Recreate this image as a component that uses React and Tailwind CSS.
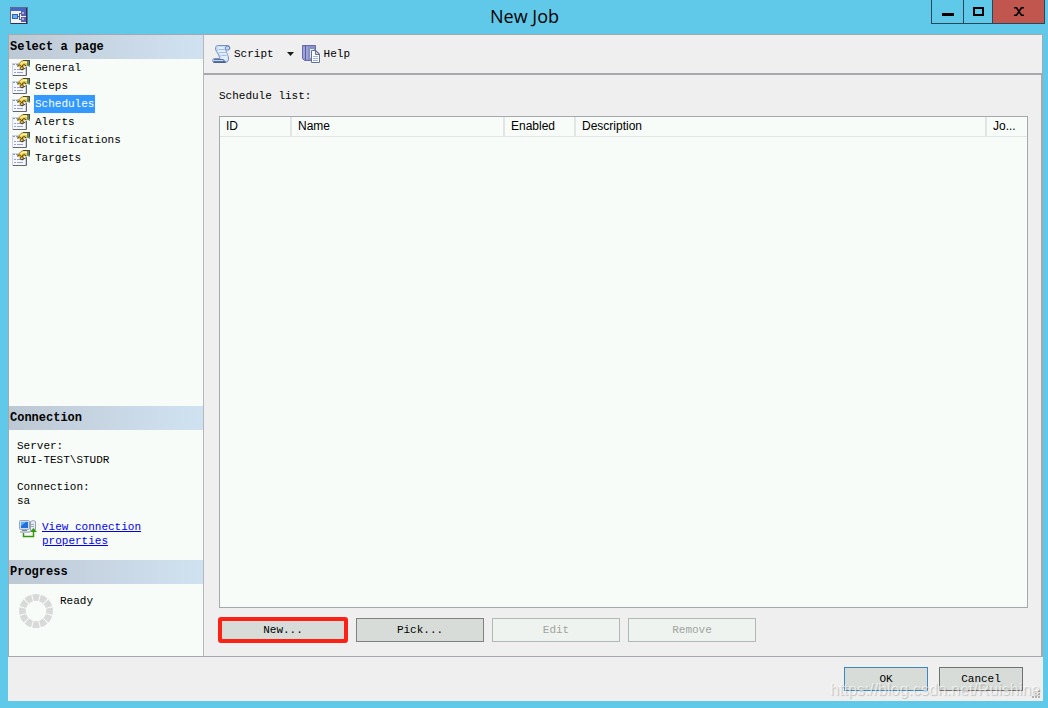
import { useState } from "react";

const pages = ["General", "Steps", "Schedules", "Alerts", "Notifications", "Targets"];

const columns = [
  { label: "ID", width: "w-[72px]" },
  { label: "Name", width: "w-[213px]" },
  { label: "Enabled", width: "w-[71px]" },
  { label: "Description", width: "" },
  { label: "Jo...", width: "w-10" },
];

function AppIcon() {
  return (
    <svg width="18" height="17" viewBox="0 0 18 17" shapeRendering="crispEdges" aria-hidden="true">
      <rect width="18" height="17" fill="#5a6a94" />
      <path d="M17 1v16H1v-1h15V1z" fill="#25305c" />
      <rect x="1" y="1" width="15" height="3" fill="#4468bd" />
      <rect x="1" y="4" width="15" height="12" fill="#f1f4fc" />
      <rect x="2" y="7" width="6" height="5" fill="#2f62b8" />
      <rect x="3" y="8" width="4" height="3" fill="#5fb4f2" />
      <path d="M8 9h2v1H8zM9 6h1v7H9zM10 6h1v1h-1zM10 12h1v1h-1z" fill="#4d5596" />
      <rect x="11" y="4" width="5" height="5" fill="#5c5fae" />
      <rect x="12" y="5" width="2" height="2" fill="#a9abe0" />
      <rect x="11" y="10" width="5" height="5" fill="#5c5fae" />
      <rect x="12" y="11" width="2" height="2" fill="#a9abe0" />
    </svg>
  );
}

function PageIcon() {
  return (
    <svg width="18" height="16" viewBox="0 0 18 16" aria-hidden="true">
      <rect x="0.5" y="3.5" width="13" height="12" fill="#f6f8fe" stroke="#cdd3e2" />
      <path d="M14.5 7v8.500H1" stroke="#66666c" fill="none" />
      <path d="M1 4.500h6" stroke="#7a96dc" strokeDasharray="2 1" />
      <path d="M2 9.500h2M5 9.500h6M2 12.500h2M5 12.500h6" stroke="#929fe0" />
      <path d="M5 6 9 1.500 11.500.500H16v5l-3 .5-2.500 3-2-.5L7 7z" fill="#edc63c" />
      <path d="M5 6 9 1.500 11.500.500H16" stroke="#b08f2c" fill="none" />
      <path d="m8.500 4 3-2 4 .5" stroke="#fff3a8" strokeWidth="1.500" fill="none" />
      <path d="m5.500 6.500 2-1.500 2 1.500-1.500 2 2 1.500 1.500-2-1.500-2 2-1.500 2.500 1.500M10 10l3.500-2" stroke="#4b3f1c" fill="none" />
      <path d="M15 1h3v6l-3-1.500z" fill="#628d6c" />
      <path d="M11 .500h7M17.500 1v4" stroke="#4d4a35" fill="none" />
    </svg>
  );
}

function ScriptIcon() {
  return (
    <svg width="19" height="18" viewBox="0 0 19 18" aria-hidden="true">
      <path
        d="M5.500.500h10c3 0 3 4.500 0 4.500H14c0 3 3 5.500 2.500 9.500-.5 2-1.500 3-3.500 3H2.500c-2.500 0-2.500-4 0-4h5C8 10 4 7.500 3.500 4c0-2 .5-3.500 2-3.500z"
        fill="#c3d8f8"
        stroke="#7c93bd"
      />
      <path d="M6 2h7.500c-1 1.500-.5 3 0 4.500l2 4.500v4H9.500L9 10 6 6.500z" fill="#e3eefd" />
      <path d="M6.500 4.500h6M7.500 7.500h6M9.500 10.500h5" stroke="#9dbcee" />
      <path d="M14 5c-1.500-1.500-.5-4 1.500-4s3 3 1 4" stroke="#5570a3" fill="none" />
      <path d="M2 14.500h9c1.500 0 1.500 2.500 0 2.500" stroke="#5570a3" fill="none" />
      <path d="M1.500 17h12" stroke="#38527f" strokeWidth="1.500" />
    </svg>
  );
}

function HelpIcon() {
  return (
    <svg width="18" height="18" viewBox="0 0 18 18" aria-hidden="true">
      <path d="M.5.500h13v15H2.500l-2-2z" fill="#8b8fcb" stroke="#666bab" />
      <path d="M3.500 1v14" stroke="#5a5ea4" />
      <path d="M2 1.500v12M5 1.500v13" stroke="#b5b8e3" />
      <path d="M7.500 3.500h5v10h-5z" fill="#dfe9f8" stroke="#8094b4" />
      <path d="M9.500 5.500h4.500l3.500 3.500v8.500h-8z" fill="#fff" stroke="#617493" />
      <path d="M13.500 5.500V9.500h4z" fill="#c9d8ef" stroke="#617493" />
      <path d="M11 11.500h5M11 13.500h5M11 15.500h5" stroke="#9db6df" />
    </svg>
  );
}

function ConnectionIcon() {
  return (
    <svg width="18" height="18" viewBox="0 0 18 18" aria-hidden="true">
      <rect x="0.5" y="0.5" width="10" height="9" rx="1" fill="#cfdaeb" stroke="#98a6bc" />
      <rect x="2" y="2" width="7" height="6" fill="#1e6fe0" />
      <path d="M2 2h5L2 6z" fill="#63aef8" />
      <path d="M3 10.500h5M1 12h10" stroke="#7e8ca5" />
      <path d="m11.500 1.500 3-1 2 1v8l-2 2-3-1z" fill="#e6eaf1" stroke="#97a1b3" />
      <path d="M12 4.500h3M12 6.500h3" stroke="#a5afc0" />
      <path d="M4.500 13v3.500h10V10" stroke="#35960f" fill="none" strokeWidth="1.500" />
      <path d="m11 12 3.500-4L18 12z" fill="#35960f" />
    </svg>
  );
}

function Spinner() {
  return (
    <svg width="34" height="34" viewBox="0 0 34 34" aria-hidden="true">
      {Array.from({ length: 12 }, (_, i) => (
        <path
          key={i}
          d="M13.200.500Q17-.5 20.800.500L19.200 7Q17 6.500 14.800 7z"
          fill="#d8d9d9"
          transform={`rotate(${i * 30} 17 17)`}
        />
      ))}
    </svg>
  );
}

function PanelHeader({ children }) {
  return (
    <h2 className="h-6 shrink-0 bg-linear-to-r from-[#bcc8d3] via-[#c8d6e4] to-[#d0e2f1] pl-px text-[12px] leading-6 font-bold">
      {children}
    </h2>
  );
}

function Sidebar() {
  const [active, setActive] = useState("Schedules");

  return (
    <aside className="flex w-[194px] shrink-0 flex-col bg-[#f7fcf8]">
      <PanelHeader>Select a page</PanelHeader>
      <nav className="flex-1">
        <ul>
          {pages.map((page) => (
            <li key={page} className="flex h-[18px] items-center gap-1 pl-[3px]">
              <PageIcon />
              <button
                onClick={() => setActive(page)}
                className={`h-[18px] px-px leading-[18px] ${active === page ? "bg-[#3399ff] text-white" : ""}`}
              >
                {page}
              </button>
            </li>
          ))}
        </ul>
      </nav>

      <PanelHeader>Connection</PanelHeader>
      <div className="h-[130px] pt-[9px] pl-2 leading-[14px]">
        <p>Server:</p>
        <p>RUI-TEST\STUDR</p>
        <p className="mt-[13px]">Connection:</p>
        <p>sa</p>
        <div className="mt-3 flex gap-[5px] pl-0.5">
          <ConnectionIcon />
          <a href="#connection" className="w-[110px] text-[#0000f0] underline">
            View connection properties
          </a>
        </div>
      </div>

      <PanelHeader>Progress</PanelHeader>
      <div className="flex h-[72px] gap-[7px] pt-[10px] pl-[10px] leading-[14px]">
        <Spinner />
        <p>Ready</p>
      </div>
    </aside>
  );
}

function Toolbar() {
  return (
    <div className="flex h-10 shrink-0 items-center border-b-2 border-[#a5a8ad] pl-2">
      <button className="flex items-center gap-[3px]">
        <ScriptIcon />
        Script
      </button>
      <button aria-label="Script options" className="ml-3 p-px">
        <svg width="7" height="4" viewBox="0 0 7 4" aria-hidden="true">
          <path d="M0 0h7L3.500 4z" fill="#1c1c1c" />
        </svg>
      </button>
      <button className="ml-[7px] flex items-center gap-1">
        <HelpIcon />
        Help
      </button>
    </div>
  );
}

function ScheduleTable() {
  return (
    <div className="flex-1 border border-[#a5a9ae] bg-[#f7fcf8]">
      <table
        aria-labelledby="schedule-list"
        className="w-full table-fixed border-separate border-spacing-0 font-['Liberation_Sans',Arial,sans-serif] text-[12px]"
      >
        <thead>
          <tr>
            {columns.map((col) => (
              <th
                key={col.label}
                className={`h-5 border-r-2 border-b border-[#e2e5e3] pl-1.5 text-left leading-[19px] font-normal last:border-r-0 ${col.width}`}
              >
                {col.label}
              </th>
            ))}
          </tr>
        </thead>
        <tbody />
      </table>
    </div>
  );
}

function ListButton({ children, disabled }) {
  return (
    <button
      disabled={disabled}
      className="block h-6 w-32 border border-[#7f8281] bg-[#d7dcd8] disabled:border-[#b0bab5] disabled:bg-[#eff3ef] disabled:text-[#a0a3a1]"
    >
      {children}
    </button>
  );
}

function TitleBar() {
  return (
    <header className="flex h-[34px] shrink-0 items-start">
      <div className="w-[118px] pt-[7px] pl-[10px]">
        <AppIcon />
      </div>
      <h1 className="flex-1 text-center font-['Open_Sans','Noto_Sans',sans-serif] text-[18px] leading-[33px]">New Job</h1>
      <div className="mr-[3px] flex h-6 border border-t-0 border-[#26495a]">
        <button aria-label="Minimize" className="flex w-8 items-center justify-center border-r border-[#26495a]">
          <span className="mt-[5px] h-[3px] w-3 bg-black" />
        </button>
        <button aria-label="Maximize" className="flex w-[29px] items-center justify-center border-r border-[#26495a]">
          <span className="h-[9px] w-[11px] border-2 border-black" />
        </button>
        <button aria-label="Close" className="flex w-[51px] items-center justify-center bg-[#c0564e]">
          <svg width="10" height="9" viewBox="0 0 10 9" aria-hidden="true">
            <path d="M0 .8h2.500L7.500 8.200H10M10 .8H7.500L2.500 8.200H0" stroke="#000" strokeWidth="1.600" fill="none" />
          </svg>
        </button>
      </div>
    </header>
  );
}

export default function App() {
  return (
    <div className="relative flex min-h-screen flex-col bg-[#60c8e8] font-['Liberation_Mono','Courier_New',monospace] text-[11px] text-black">
      <TitleBar />
      <div className="mr-[5px] mb-[7px] ml-2 flex flex-1 flex-col bg-[#efefef]">
        <div className="flex flex-1 border border-[#a5a8ad]">
          <Sidebar />
          <main className="flex flex-1 flex-col border-l border-[#b5b8bb]">
            <Toolbar />
            <div className="flex flex-1 flex-col border-r border-[#a5a8ad] pt-[13px] pr-[13px] pb-3.5 pl-[15px]">
              <h2 id="schedule-list" className="mb-3 leading-4">
                Schedule list:
              </h2>
              <ScheduleTable />
              <div className="mt-[10px] flex gap-2">
                <div className="rounded-xs outline-4 -outline-offset-3 outline-[#fb2114]">
                  <ListButton>New...</ListButton>
                </div>
                <div className="ml-px flex gap-2">
                  <ListButton>Pick...</ListButton>
                  <ListButton disabled>Edit</ListButton>
                  <ListButton disabled>Remove</ListButton>
                </div>
              </div>
            </div>
          </main>
        </div>

        <footer className="flex h-11 shrink-0 items-start justify-end gap-[11px] pt-[10px] pr-5">
          <button className="h-6 w-[84px] border border-[#3c88c2] bg-[#d7dcd8]">OK</button>
          <button className="h-6 w-[84px] border border-[#6f7271] bg-[#d7dcd8]">Cancel</button>
        </footer>
      </div>

      <svg className="absolute right-[7px] bottom-[9px]" width="9" height="9" viewBox="0 0 9 9" aria-hidden="true">
        <path d="M6 0h2v2H6zM3 3h2v2H3zM6 3h2v2H6zM0 6h2v2H0zM3 6h2v2H3zM6 6h2v2H6z" fill="#b3b3b3" />
      </svg>
      <p className="pointer-events-none absolute right-2 bottom-2 font-['Liberation_Sans',Arial,sans-serif] text-[16px] leading-5 text-white/60 [text-shadow:1px_1px_1px_rgba(0,0,0,0.2)]">
        https://blog.csdn.net/Ruishine
      </p>
    </div>
  );
}
